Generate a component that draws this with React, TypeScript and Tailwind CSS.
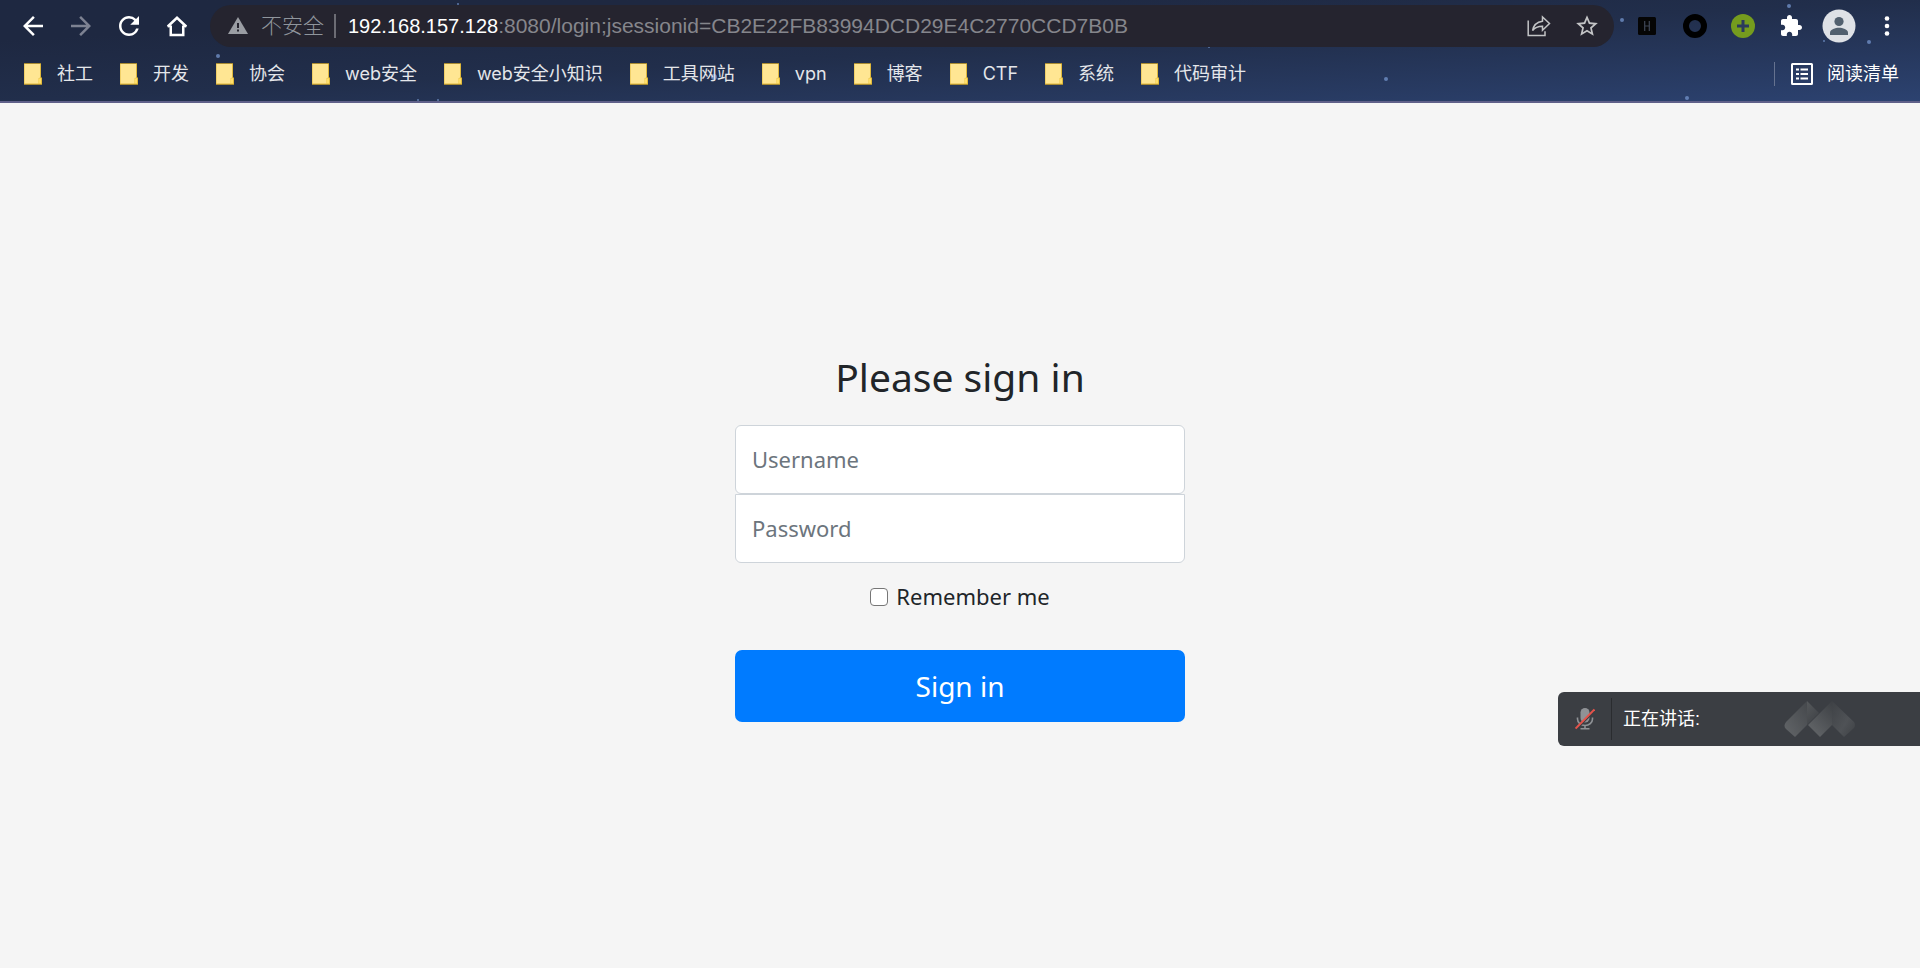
import React, { useState } from "react";

type IconProps = {
  className?: string;
};

const BackIcon = ({ className }: IconProps) => (
  <svg viewBox="0 0 24 24" className={className} fill="currentColor">
    <path d="M20 11H7.83l5.59-5.59L12 4l-8 8 8 8 1.41-1.41L7.83 13H20v-2z" />
  </svg>
);

const ForwardIcon = ({ className }: IconProps) => (
  <svg viewBox="0 0 24 24" className={className} fill="currentColor">
    <path d="M12 4l-1.41 1.41L16.17 11H4v2h12.17l-5.58 5.59L12 20l8-8z" />
  </svg>
);

const ReloadIcon = ({ className }: IconProps) => (
  <svg viewBox="0 0 24 24" className={className} fill="currentColor">
    <path d="M17.65 6.35A7.958 7.958 0 0 0 12 4c-4.42 0-7.99 3.58-7.99 8s3.57 8 7.99 8c3.73 0 6.84-2.55 7.73-6h-2.08A5.99 5.99 0 0 1 12 18c-3.31 0-6-2.69-6-6s2.69-6 6-6c1.66 0 3.14.69 4.22 1.78L13 11h7V4l-2.35 2.35z" />
  </svg>
);

const HomeIcon = ({ className }: IconProps) => (
  <svg
    viewBox="0 0 24 24"
    className={className}
    fill="none"
    stroke="currentColor"
    strokeWidth="2"
  >
    <path d="M7 11.5v7.7h10v-7.7" />
    <path d="M4.6 12.4 12 5.4l7.4 7" />
    <path d="M4.5 12.2H7M17 12.2h2.5" strokeWidth="1.6" />
  </svg>
);

const WarningIcon = ({ className }: IconProps) => (
  <svg viewBox="0 0 20 18" className={className}>
    <path d="M10 0 20 17H0z" fill="#9a9da3" />
    <path d="M9 6h2v5H9zM9 12.5h2v2H9z" fill="#25242f" />
  </svg>
);

const ShareIcon = ({ className }: IconProps) => (
  <svg
    viewBox="0 0 24 22"
    className={className}
    fill="none"
    stroke="currentColor"
    strokeWidth="1.5"
  >
    <path d="M1.2 5.5v15H18v-4.2" />
    <path d="M15.5 2v4.2C9.5 7 6.5 9.8 5.6 15.5c2.4-3.3 5.4-4.3 9.9-4.3v4.1L22.5 8.500z" />
  </svg>
);

const StarIcon = ({ className }: IconProps) => (
  <svg viewBox="0 0 24 24" className={className} fill="currentColor">
    <path d="M22 9.24l-7.19-.62L12 2 9.19 8.63 2 9.24l5.46 4.73L5.82 21 12 17.27 18.18 21l-1.63-7.03L22 9.24zM12 15.4l-3.76 2.27 1-4.28-3.32-2.88 4.38-.38L12 6.1l1.71 4.04 4.38.38-3.32 2.88 1 4.28L12 15.4z" />
  </svg>
);

const HIcon = ({ className }: IconProps) => (
  <svg viewBox="0 0 18 18" className={className}>
    <rect width="18" height="18" rx="1.5" fill="#050505" />
    <path
      d="M6.700 4v10M11.3 4v10M6.7 9h4.6"
      stroke="#3f4757"
      strokeWidth="1.2"
    />
  </svg>
);

const RingIcon = ({ className }: IconProps) => (
  <svg viewBox="0 0 24 24" className={className}>
    <circle cx="12" cy="12" r="9" fill="none" stroke="#000" strokeWidth="6" />
  </svg>
);

const PlusIcon = ({ className }: IconProps) => (
  <svg viewBox="0 0 24 24" className={className}>
    <circle cx="12" cy="12" r="12" fill="#759c1e" />
    <path d="M12 6v12M6 12h12" stroke="#2a3a5c" strokeWidth="3" />
  </svg>
);

const PuzzleIcon = ({ className }: IconProps) => (
  <svg viewBox="0 0 24 24" className={className} fill="currentColor">
    <path d="M20.5 11H19V7c0-1.1-.9-2-2-2h-4V3.5C13 2.12 11.88 1 10.5 1S8 2.12 8 3.5V5H4c-1.1 0-1.99.9-1.99 2v3.8H3.5c1.49 0 2.7 1.21 2.7 2.7s-1.21 2.7-2.7 2.7H2V20c0 1.1.9 2 2 2h3.8v-1.5c0-1.49 1.21-2.7 2.7-2.7 1.49 0 2.7 1.21 2.7 2.7V22H17c1.1 0 2-.9 2-2v-4h1.5c1.38 0 2.5-1.12 2.5-2.5S21.88 11 20.5 11z" />
  </svg>
);

const AvatarIcon = ({ className }: IconProps) => (
  <svg viewBox="0 0 34 34" className={className}>
    <circle cx="17" cy="17" r="16.5" fill="#dee1e6" />
    <circle cx="17" cy="12.5" r="4.6" fill="#52606f" />
    <path d="M8 26v-2.3c0-3.2 5.5-5 9-5s9 1.8 9 5V26z" fill="#52606f" />
  </svg>
);

const MenuIcon = ({ className }: IconProps) => (
  <svg viewBox="0 0 24 24" className={className} fill="currentColor">
    <circle cx="12" cy="4.5" r="2.3" />
    <circle cx="12" cy="12" r="2.3" />
    <circle cx="12" cy="19.5" r="2.3" />
  </svg>
);

const FolderIcon = ({ className }: IconProps) => (
  <svg viewBox="0 0 18 22" className={className}>
    <path d="M0 0h17v14.5h1V22H0z" fill="#e0b93c" />
    <path d="M.5 1H16v13.5l-1.500 1V20.500H.5z" fill="#ffe693" />
    <path d="M14.5 20.500v-4.200l1-1h1.500v5.200z" fill="#ffdf6b" />
    <path d="M0 .5h17M0 21.500h18" stroke="#a98c33" />
  </svg>
);

const ListIcon = ({ className }: IconProps) => (
  <svg viewBox="0 0 22 22" className={className}>
    <rect
      x="1"
      y="1"
      width="20"
      height="20"
      rx="0.5"
      fill="none"
      stroke="currentColor"
      strokeWidth="2"
    />
    <path
      d="M5 6.500h3M5 11h3M5 15.500h3M9.500 6.500H17M9.500 11H17M9.500 15.500H17"
      stroke="currentColor"
      strokeWidth="2"
    />
  </svg>
);

const MutedMicIcon = ({ className }: IconProps) => (
  <svg viewBox="0 0 20 24" className={className} fill="none">
    <rect x="5.5" y="1" width="9" height="14.5" rx="4.5" fill="#8f9296" />
    <path
      d="M2.500 10.500v1.500a7.500 6.500 0 0 0 15 0v-1.500M10 18.500v3M5.500 21.700h9"
      stroke="#8f9296"
      strokeWidth="1.6"
    />
    <path d="M1.600 22.300 20 3.500" stroke="#3b3e43" strokeWidth="1.600" />
    <path d="M.6 21.600 19.400 2.400" stroke="#e5534b" strokeWidth="1.900" />
  </svg>
);

const MeetingLogo = ({ className }: IconProps) => (
  <svg viewBox="0 0 72 38" className={className}>
    <defs>
      <linearGradient id="wing" x1="1" y1="0" x2="0" y2="1">
        <stop offset="0" stopColor="#45484c" />
        <stop offset="1" stopColor="#636669" />
      </linearGradient>
      <linearGradient id="fold" x1="0" y1="0" x2="0.6" y2="1">
        <stop offset="0" stopColor="#56595c" />
        <stop offset="1" stopColor="#404347" />
      </linearGradient>
      <linearGradient id="middle" x1="0.9" y1="0" x2="0.2" y2="1">
        <stop offset="0" stopColor="#3f4246" />
        <stop offset="1" stopColor="#636669" />
      </linearGradient>
      <linearGradient id="tail" x1="0" y1="0" x2="1" y2="1">
        <stop offset="0" stopColor="#3f4246" />
        <stop offset="0.600" stopColor="#4f5256" />
        <stop offset="1" stopColor="#3e4145" />
      </linearGradient>
    </defs>
    <path d="M23 1v24L11 37 2 29q-3-3 0-7z" fill="url(#wing)" />
    <path d="M23 1l12 12-12 12z" fill="url(#fold)" />
    <path d="M48 1l22 21q2 3 0 6L60 37 48 25z" fill="url(#tail)" />
    <path d="M48 1v24L36 37 24 25z" fill="url(#middle)" />
  </svg>
);

const BOOKMARKS = [
  "社工",
  "开发",
  "协会",
  "web安全",
  "web安全小知识",
  "工具网站",
  "vpn",
  "博客",
  "CTF",
  "系统",
  "代码审计",
];

const STARS = [
  { x: 218, y: 56, r: 2 },
  { x: 458, y: 4, r: 1 },
  { x: 714, y: 77, r: 3 },
  { x: 418, y: 100, r: 1 },
  { x: 438, y: 100, r: 1 },
  { x: 1209, y: 47, r: 1 },
  { x: 1386, y: 79, r: 2 },
  { x: 1622, y: 20, r: 2 },
  { x: 1687, y: 98, r: 2 },
  { x: 1789, y: 6, r: 2 },
  { x: 1824, y: 41, r: 1 },
  { x: 1869, y: 42, r: 2 },
];

type ToolButtonProps = {
  label: string;
  children: React.ReactNode;
};

const ToolButton: React.FC<ToolButtonProps> = ({ label, children }) => (
  <button
    type="button"
    aria-label={label}
    className="flex size-12 items-center justify-center text-white"
  >
    {children}
  </button>
);

const BrowserHeader = () => (
  <header className="relative border-b-2 border-[#5f6089] bg-linear-to-br from-[#1e2841] from-20% via-[#212e4b] via-50% to-[#2c4270]">
    <svg className="absolute inset-0 size-full" aria-hidden="true">
      {STARS.map((star) => (
        <circle
          key={`${star.x}-${star.y}`}
          cx={star.x}
          cy={star.y}
          r={star.r}
          fill="#6f8fc4"
          opacity="0.8"
        />
      ))}
    </svg>

    <div className="relative flex items-center gap-[9px] px-[9px] pt-0.5">
      <nav className="flex" aria-label="Navigation">
        <ToolButton label="Back">
          <BackIcon className="size-[30px]" />
        </ToolButton>
        <ToolButton label="Forward">
          <ForwardIcon className="size-[30px] text-[#7d8292]" />
        </ToolButton>
        <ToolButton label="Reload">
          <ReloadIcon className="size-[30px]" />
        </ToolButton>
        <ToolButton label="Home">
          <HomeIcon className="size-[30px]" />
        </ToolButton>
      </nav>

      <div className="flex h-[42px] flex-1 items-center rounded-full bg-[#25242f] pr-[14px] pl-[18px] font-['Liberation_Sans','Noto_Sans_CJK_SC',sans-serif] text-[21px]">
        <WarningIcon className="h-[18px] w-5" />
        <span className="ml-[13px] font-light text-[#8f959c]">不安全</span>
        <span className="mr-3 ml-2.5 h-6 w-0.5 bg-[#6c6c74]" />
        <span className="whitespace-nowrap text-[#85868c]">
          <span className="text-xl text-white">192.168.157.128</span>
          :8080/login;jsessionid=CB2E22FB83994DCD29E4C2770CCD7B0B
        </span>
        <div className="ml-auto flex items-center gap-[23px] text-[#c3c4c6]">
          <button type="button" aria-label="Share">
            <ShareIcon className="h-[22px] w-6" />
          </button>
          <button type="button" aria-label="Bookmark this page">
            <StarIcon className="size-[26px]" />
          </button>
        </div>
      </div>

      <div className="flex">
        <ToolButton label="H extension">
          <HIcon className="size-[18px]" />
        </ToolButton>
        <ToolButton label="Ring extension">
          <RingIcon className="size-6" />
        </ToolButton>
        <ToolButton label="Plus extension">
          <PlusIcon className="size-6" />
        </ToolButton>
        <ToolButton label="Extensions">
          <PuzzleIcon className="size-6" />
        </ToolButton>
        <ToolButton label="Profile">
          <AvatarIcon className="size-[34px]" />
        </ToolButton>
        <ToolButton label="Menu">
          <MenuIcon className="size-6" />
        </ToolButton>
      </div>
    </div>

    <div className="relative flex h-[51px] items-center justify-between pr-[21px] pb-[3px] pl-6 font-[Inter,'Noto_Sans_CJK_SC',sans-serif] text-lg text-[#e4e6ea]">
      <div className="flex gap-[27px]">
        {BOOKMARKS.map((name) => (
          <button
            key={name}
            type="button"
            className="flex items-center gap-[15px] whitespace-nowrap"
          >
            <FolderIcon className="h-[22px] w-[18px]" />
            {name}
          </button>
        ))}
      </div>
      <div className="flex items-center gap-4">
        <span className="h-6 w-px bg-[#65728f]" />
        <button
          type="button"
          className="flex items-center gap-[14px] text-white"
        >
          <ListIcon className="size-[22px]" />
          阅读清单
        </button>
      </div>
    </div>
  </header>
);

const SignInForm = () => {
  const [formData, setFormData] = useState({
    username: "",
    password: "",
    remember: false,
  });

  const handleChange = (e: React.ChangeEvent<HTMLInputElement>) => {
    const { name, value, type, checked } = e.target;
    setFormData((prevData) => ({
      ...prevData,
      [name]: type === "checkbox" ? checked : value,
    }));
  };

  return (
    <form
      onSubmit={(e) => e.preventDefault()}
      className="flex w-full max-w-[450px] flex-col text-[22px] text-[#212529]"
    >
      <h1 className="mb-6 text-center text-[39px] leading-[48px]">
        Please sign in
      </h1>
      <input
        type="text"
        name="username"
        aria-label="Username"
        value={formData.username}
        onChange={handleChange}
        placeholder="Username"
        className="h-[69px] rounded-md border border-[#ced4da] bg-white px-4 placeholder:text-[#6c757d]"
      />
      <input
        type="password"
        name="password"
        aria-label="Password"
        value={formData.password}
        onChange={handleChange}
        placeholder="Password"
        className="h-[69px] rounded-b-md border border-[#ced4da] bg-white px-4 placeholder:text-[#6c757d]"
      />
      <label className="mt-4 mb-[35px] flex h-9 items-center justify-center gap-2">
        <input
          type="checkbox"
          name="remember"
          checked={formData.remember}
          onChange={handleChange}
          className="size-[18px] appearance-none rounded-sm border border-[#767676] bg-white checked:bg-[#007bff]"
        />
        Remember me
      </label>
      <button
        type="submit"
        className="h-[72px] rounded-[7px] bg-[#007bff] text-[28px] text-white"
      >
        Sign in
      </button>
    </form>
  );
};

const SpeakingBar = () => (
  <div className="fixed right-0 bottom-[222px] flex h-[54px] w-[362px] items-center rounded-l-md bg-[#3b3e43] pl-[17px] font-['Liberation_Sans','Noto_Sans_CJK_SC',sans-serif] text-lg text-white">
    <button type="button" aria-label="Unmute">
      <MutedMicIcon className="h-6 w-5" />
    </button>
    <span className="mr-[11px] ml-4 h-[42px] w-px bg-[#2a2c2f]" />
    <span>正在讲话:</span>
    <MeetingLogo className="mr-16 ml-auto h-[38px] w-[72px]" />
  </div>
);

export default function App() {
  return (
    <div className="flex min-h-screen flex-col bg-[#f5f5f5] font-['Noto_Sans',sans-serif]">
      <BrowserHeader />
      <main className="flex flex-1 items-center justify-center px-4 pt-[3px]">
        <SignInForm />
      </main>
      <SpeakingBar />
    </div>
  );
}
